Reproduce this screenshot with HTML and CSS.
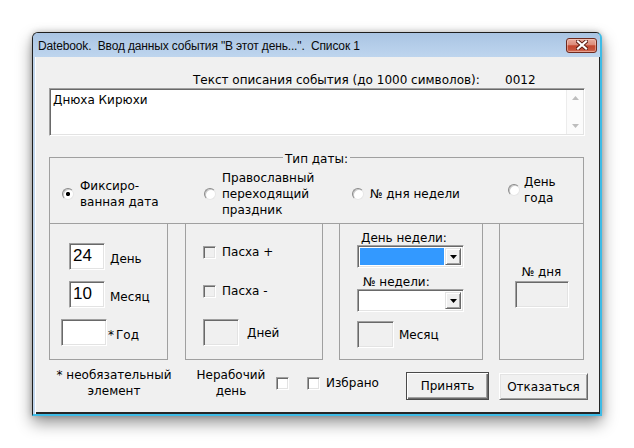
FILE: index.html
```html
<!DOCTYPE html>
<html lang="ru">
<head>
<meta charset="utf-8">
<title>Datebook</title>
<link rel="stylesheet" href="styles.css">
</head>
<body>
<div class="window">
  <div class="titlebar">
    <span class="title">Datebook.  Ввод данных события "В этот день...".  Список 1</span>
    <div class="close">
      <svg width="12" height="10" viewBox="0 0 12 10"><path d="M2 1.5 L10 8.5 M10 1.5 L2 8.5" stroke="#5b1a10" stroke-width="4" stroke-linecap="square"/><path d="M2 1.5 L10 8.5 M10 1.5 L2 8.5" stroke="#ffffff" stroke-width="2.2" stroke-linecap="square"/></svg>
    </div>
  </div>
  <div class="client">
    <div class="desc-row"><span class="desc-label">Текст описания события (до 1000 символов):</span><span>0012</span></div>
    <div class="memo">
      <div class="memo-text">Днюха Кирюхи</div>
      <div class="vscroll">
        <div class="sbtn"><svg width="7" height="4" viewBox="0 0 7 4"><polygon points="3.5,0 7,4 0,4" fill="#bdbdbd"/></svg></div>
        <div class="sbtn"><svg width="7" height="4" viewBox="0 0 7 4"><polygon points="0,0 7,0 3.5,4" fill="#bdbdbd"/></svg></div>
      </div>
    </div>
    <div class="group">
      <div class="legend"><span>Тип даты:</span></div>
      <div class="radios">
        <div class="opt"><span class="radio checked"></span><span class="opt-text">Фиксиро-<br>ванная дата</span></div>
        <div class="opt"><span class="radio"></span><span class="opt-text">Православный<br>переходящий<br>праздник</span></div>
        <div class="opt"><span class="radio"></span><span class="opt-text">№ дня недели</span></div>
        <div class="opt opt-last"><span class="radio"></span><span class="opt-text">День<br>года</span></div>
      </div>
    </div>
    <div class="panels">
      <div class="panel p1">
        <div class="row r-day"><div class="edit big w36">24</div><span class="lbl">День</span></div>
        <div class="row r-month"><div class="edit big w36">10</div><span class="lbl">Месяц</span></div>
        <div class="row r-year"><div class="edit w46"></div><span class="lbl lbl-year"><span class="star">*</span>Год</span></div>
      </div>
      <div class="panel p2">
        <div class="row r-chk1"><span class="check disabled"></span><span class="chk-lbl">Пасха +</span></div>
        <div class="row r-chk2"><span class="check disabled"></span><span class="chk-lbl">Пасха -</span></div>
        <div class="row r-days"><div class="edit disabled w36"></div><span class="lbl lbl-days">Дней</span></div>
      </div>
      <div class="panel p3">
        <div class="p3-lbl1">День недели:</div>
        <div class="combo"><div class="combo-field selected"></div><div class="combo-btn"><svg width="7" height="4" viewBox="0 0 7 4"><polygon points="0,0 7,0 3.5,4" fill="#000"/></svg></div></div>
        <div class="p3-lbl2">№ недели:</div>
        <div class="combo"><div class="combo-field"></div><div class="combo-btn"><svg width="7" height="4" viewBox="0 0 7 4"><polygon points="0,0 7,0 3.5,4" fill="#000"/></svg></div></div>
        <div class="row r-p3month"><div class="edit disabled w37"></div><span class="lbl lbl-p3m">Месяц</span></div>
      </div>
      <div class="panel p4">
        <div class="p4-lbl">№ дня</div>
        <div class="edit disabled w54"></div>
      </div>
    </div>
    <div class="footer">
      <div class="note">* необязательный<br>элемент</div>
      <div class="holiday">Нерабочий<br>день</div>
      <span class="check f-chk1"></span>
      <span class="check f-chk2"></span>
      <span class="fav">Избрано</span>
      <div class="btn default">Принять</div>
      <div class="btn cancel">Отказаться</div>
    </div>
  </div>
</div>
</body>
</html>
```
FILE: styles.css
```css
html, body {
  margin: 0;
  padding: 0;
  background: #ffffff;
}

body {
  width: 634px;
  height: 448px;
  overflow: hidden;
  font-family: "DejaVu Sans", "Liberation Sans", sans-serif;
  font-size: 12px;
  color: #000;
}

.window {
  box-sizing: border-box;
  width: 570px;
  height: 384px;
  margin: 32px 0 0 32px;
  border-top: 1px solid #1e1e1e;
  border-left: 1px solid #1e1e1e;
  border-right: 2px solid #3dbbe6;
  border-bottom: 2px solid #3dbbe6;
  border-radius: 6px 6px 0 0;
  background: #c0d5ec;
  display: flex;
  flex-direction: column;
  box-shadow: 0 7px 16px rgba(0, 0, 0, 0.42), 0 0 6px rgba(0, 0, 0, 0.22);
}

.titlebar {
  height: 24px;
  flex: none;
  display: flex;
  align-items: center;
  justify-content: space-between;
  background: linear-gradient(180deg, #a9c4e3 0%, #b4cde9 50%, #bed5ee 100%);
  border-radius: 5px 5px 0 0;
  padding-left: 5px;
  padding-right: 3px;
}

.title {
  white-space: pre;
  font-family: "Liberation Sans", Arial, sans-serif;
  font-size: 12px;
  letter-spacing: -0.15px;
  color: #0a0a0a;
  padding-top: 1px;
}

.close {
  box-sizing: border-box;
  width: 31px;
  height: 15px;
  border: 1px solid #6e2a1f;
  border-radius: 3px;
  background: linear-gradient(180deg, #e9ad9f 0%, #dc8b79 45%, #c4472f 52%, #c5523b 80%, #d8775f 100%);
  box-shadow: inset 0 0 0 1px rgba(255, 220, 210, 0.45);
  display: flex;
  align-items: center;
  justify-content: center;
}

.client {
  flex: 1;
  margin-left: 3px;
  background: #f0f0f0;
  border-right: 1px solid #262626;
  border-bottom: 2px solid #262626;
  box-shadow: -1px 0 0 #ffffff;
  padding-left: 13px;
  display: flex;
  flex-direction: column;
}

.desc-row {
  display: flex;
  margin-top: 16px;
  padding-left: 144px;
  line-height: 14px;
  height: 14px;
}

.desc-label {
  width: 312px;
}

/* sunken 3D edges */
.memo, .edit, .check, .combo {
  box-sizing: border-box;
  border: 1px solid;
  border-color: #a0a0a0 #ffffff #ffffff #a0a0a0;
  box-shadow: inset 1px 1px 0 #696969, inset -1px -1px 0 #e3e3e3;
}

.memo {
  margin-top: 1px;
  width: 536px;
  height: 48px;
  background: #fff;
  display: flex;
  padding: 1px 1px 1px 1px;
}

.memo-text {
  flex: 1;
  padding: 3px 0 0 2px;
  line-height: 14px;
}

.vscroll {
  width: 16px;
  display: flex;
  flex-direction: column;
  justify-content: space-between;
  border-left: 1px solid #ececec;
  background: #fbfbfb;
}

.sbtn {
  height: 16px;
  display: flex;
  align-items: center;
  justify-content: center;
}

.group {
  box-sizing: border-box;
  margin-top: 21px;
  width: 535px;
  height: 67px;
  border: 1px solid #a0a0a0;
}

.legend {
  display: flex;
  justify-content: center;
  margin-top: -6px;
  height: 14px;
  line-height: 14px;
}

.legend span {
  background: #f0f0f0;
  padding: 0 2px;
}

.radios {
  display: grid;
  grid-template-columns: 142px 148px 156px 1fr;
  height: 55px;
  padding-left: 12px;
  align-items: center;
}

.opt {
  display: flex;
  align-items: center;
  gap: 6px;
}

.opt-last {
  gap: 4px;
  margin-bottom: 7px;
}

.opt-text {
  line-height: 16px;
}

.radio {
  box-sizing: border-box;
  flex: none;
  width: 12px;
  height: 12px;
  border-radius: 50%;
  border: 1px solid;
  border-color: #8a8a8a #e6e6e6 #e6e6e6 #8a8a8a;
  background: #ffffff;
  box-shadow: inset 1px 1px 0 #c9c9c9;
}

.radio.checked {
  background: radial-gradient(circle at 50% 50%, #000 0, #000 1.8px, #fff 2.4px);
}

.panels {
  display: flex;
  margin-top: -1px;
  height: 137px;
}

.panel {
  box-sizing: border-box;
  height: 137px;
  border: 1px solid #a0a0a0;
  display: flex;
  flex-direction: column;
  align-items: flex-start;
}

.p1 { width: 119px; padding-top: 19px; }
.p2 { width: 138px; margin-left: 17px; padding-top: 21px; }
.p3 { width: 144px; margin-left: 16px; padding-top: 7px; }
.p4 { width: 85px; margin-left: 16px; padding-top: 41px; align-items: center; }

.row {
  display: flex;
  align-items: flex-end;
}

.lbl {
  line-height: 14px;
  margin-left: 5px;
  margin-bottom: 4px;
}

.r-day { margin-left: 19px; }
.r-month { margin-left: 19px; margin-top: 11px; }
.r-year { margin-left: 11px; margin-top: 11px; }
.lbl-year { margin-left: 1px; }
.star { margin-right: 2px; }

.edit {
  height: 27px;
  background: #fff;
  padding: 2px 0 0 3px;
}

.edit.big {
  font-family: "Liberation Sans", Arial, sans-serif;
  font-size: 17px;
  line-height: 20px;
}

.edit.disabled, .check.disabled {
  background: #f0f0f0;
}

.w36 { width: 36px; }
.w37 { width: 37px; }
.w46 { width: 46px; }
.w54 { width: 54px; }

.check {
  flex: none;
  width: 13px;
  height: 13px;
  background: #fff;
}

.r-chk1, .r-chk2 {
  align-items: center;
  margin-left: 17px;
}

.r-chk2 { margin-top: 25px; }

.chk-lbl {
  margin-left: 6px;
  line-height: 14px;
}

.r-days { margin-left: 17px; margin-top: 21px; }
.lbl-days { margin-left: 8px; margin-bottom: 6px; }

.p3-lbl1 {
  line-height: 14px;
  margin-left: 21px;
}

.p3-lbl2 {
  line-height: 14px;
  margin-left: 23px;
  margin-top: 7px;
}

.combo {
  width: 107px;
  height: 23px;
  margin-left: 17px;
  background: #fff;
  padding: 2px 2px 2px 2px;
  display: flex;
  gap: 1px;
}

.combo-field {
  flex: 1;
}

.combo-field.selected {
  background: #3399ff;
}

.combo-btn {
  box-sizing: border-box;
  width: 16px;
  background: #f0f0f0;
  border: 1px solid;
  border-color: #e3e3e3 #696969 #696969 #e3e3e3;
  box-shadow: inset 1px 1px 0 #ffffff, inset -1px -1px 0 #a0a0a0;
  display: flex;
  align-items: center;
  justify-content: center;
}

.r-p3month { margin-left: 17px; margin-top: 9px; }
.lbl-p3m { margin-bottom: 6px; }

.p4-lbl {
  line-height: 14px;
  margin-bottom: 2px;
}

.footer {
  display: flex;
  align-items: flex-start;
  margin-top: 1px;
}

.note {
  width: 130px;
  margin-top: 6px;
  line-height: 16px;
  text-align: center;
}

.holiday {
  width: 80px;
  margin-left: 12px;
  margin-top: 6px;
  line-height: 16px;
  text-align: center;
}

.f-chk1 { margin-left: 5px; margin-top: 16px; }
.f-chk2 { margin-left: 18px; margin-top: 16px; }

.fav {
  width: 80px;
  margin-left: 6px;
  margin-top: 15px;
  line-height: 14px;
}

.btn {
  box-sizing: border-box;
  display: flex;
  align-items: center;
  justify-content: center;
  background: #f0f0f0;
  line-height: 14px;
}

.btn.default {
  width: 83px;
  height: 28px;
  margin-top: 11px;
  border: 1px solid #4a4a4a;
  box-shadow: inset 1px 1px 0 #ffffff, inset -1px -1px 0 #6a6a6a, inset -2px -2px 0 #a0a0a0;
}

.btn.cancel {
  width: 89px;
  height: 27px;
  margin-top: 12px;
  margin-left: 10px;
  border: 1px solid;
  border-color: #ffffff #696969 #696969 #ffffff;
  box-shadow: inset 1px 1px 0 #e3e3e3, inset -1px -1px 0 #a0a0a0;
}
```
